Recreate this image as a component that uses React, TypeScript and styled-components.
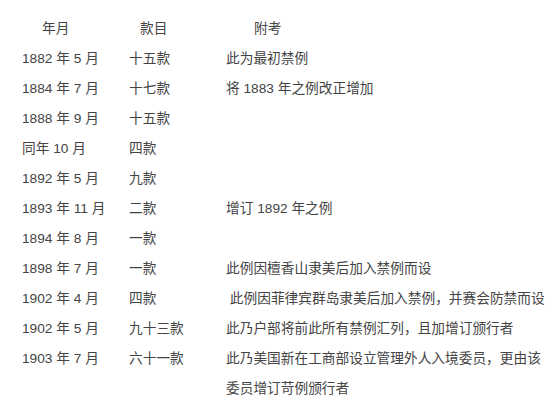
import React from 'react';
import styled, { createGlobalStyle } from 'styled-components';

const GlobalStyle = createGlobalStyle`
  html, body {
    margin: 0;
    padding: 0;
    background: #fff;
  }
  body {
    font-family: "Liberation Sans", "Noto Sans CJK SC", sans-serif;
    color: #444;
    overflow: hidden;
  }
`;

const Page = styled.div`
  padding: 14px 0 0 22px;
  font-size: 13.7px;
  line-height: 30px;
`;

const Row = styled.div`
  display: grid;
  grid-template-columns: 107px 97px 323px;
  align-items: start;
`;

const Cell = styled.div<{ $indent?: number }>`
  padding-left: ${p => p.$indent ?? 0}px;
  white-space: pre-wrap;
`;

interface Entry {
  date: string;
  count: string;
  note?: string;
}

const entries: Entry[] = [
  { date: '1882 年 5 月', count: '十五款', note: '此为最初禁例' },
  { date: '1884 年 7 月', count: '十七款', note: '将 1883 年之例改正增加' },
  { date: '1888 年 9 月', count: '十五款' },
  { date: '同年 10 月', count: '四款' },
  { date: '1892 年 5 月', count: '九款' },
  { date: '1893 年 11 月', count: '二款', note: '增订 1892 年之例' },
  { date: '1894 年 8 月', count: '一款' },
  { date: '1898 年 7 月', count: '一款', note: '此例因檀香山隶美后加入禁例而设' },
  { date: '1902 年 4 月', count: '四款', note: ' 此例因菲律宾群岛隶美后加入禁例，并赛会防禁而设' },
  { date: '1902 年 5 月', count: '九十三款', note: '此乃户部将前此所有禁例汇列，且加增订颁行者' },
  {
    date: '1903 年 7 月',
    count: '六十一款',
    note: '此乃美国新在工商部设立管理外人入境委员，更由该委员增订苛例颁行者',
  },
];

export default function App() {
  return (
    <>
      <GlobalStyle />
      <Page>
        <Row>
          <Cell $indent={20}>年月</Cell>
          <Cell $indent={11}>款目</Cell>
          <Cell $indent={28}>附考</Cell>
        </Row>
        {entries.map(e => (
          <Row key={e.date + e.count}>
            <Cell>{e.date}</Cell>
            <Cell>{e.count}</Cell>
            <Cell>{e.note}</Cell>
          </Row>
        ))}
      </Page>
    </>
  );
}
